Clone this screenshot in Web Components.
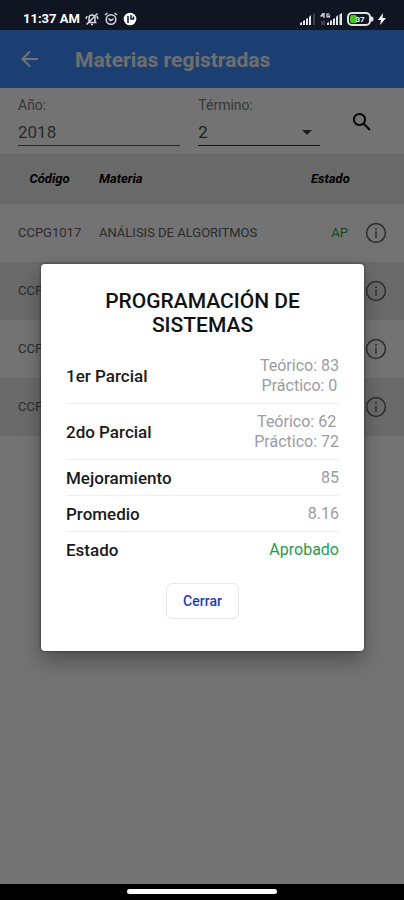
<!DOCTYPE html>
<html lang="es">
<head>
<meta charset="utf-8">
<meta name="viewport" content="width=device-width, initial-scale=1">
<title>Materias registradas</title>
<style>
body {
   margin: 0;
   font-family: Roboto, "Liberation Sans", sans-serif;
   background: #fff;
}
</style>
</head>
<body>

<mr-screen>
   <mr-status-bar slot="status" time="11:37 AM" battery="37"></mr-status-bar>
   <mr-top-bar>Materias registradas</mr-top-bar>
   <mr-filter year="2018" term="2"></mr-filter>
   <mr-subjects></mr-subjects>
   <mr-modal slot="overlay" heading="PROGRAMACIÓN DE SISTEMAS">
      <mr-grade label="1er Parcial"><div>Teórico: 83</div><div>Práctico: 0</div></mr-grade>
      <mr-grade label="2do Parcial"><div>Teórico: 62</div><div>Práctico: 72</div></mr-grade>
      <mr-grade label="Mejoramiento">85</mr-grade>
      <mr-grade label="Promedio">8.16</mr-grade>
      <mr-grade label="Estado" passed>Aprobado</mr-grade>
   </mr-modal>
</mr-screen>

<script>
// Shared base: every element renders its markup in an open shadow root
class BaseElement extends HTMLElement {
   constructor() {
      super()
      this.attachShadow({ mode: 'open' })
   }

   connectedCallback() {
      this.shadowRoot.innerHTML = this.render()
   }

   attr(name) {
      return this.getAttribute(name) ?? ''
   }
}

class Screen extends BaseElement {
   render() {
      return `
<style>
:host {
   display: flex;
   flex-direction: column;
   min-height: 100vh;
}
main {
   position: relative;
   flex: 1;
}
footer {
   display: flex;
   justify-content: center;
   height: 11px;
   padding-top: 5px;
   background: #000;
}
footer span {
   width: 37%;
   height: 5px;
   border-radius: 3px;
   background: #fff;
}
</style>
<slot name="status"></slot>
<main>
   <slot></slot>
   <slot name="overlay"></slot>
</main>
<footer><span></span></footer>`
   }
}

class StatusBar extends BaseElement {
   render() {
      return `
<style>
:host {
   display: flex;
   align-items: center;
   box-sizing: border-box;
   height: 30px;
   padding: 8px 18px 0 23px;
   background: #101522;
   color: #fff;
}
time {
   margin-right: 5px;
   font-size: 13px;
   line-height: 16px;
   font-weight: 700;
}
svg { display: block; }
.left, .right {
   display: flex;
   align-items: center;
   gap: 5px;
}
.right { margin-left: auto; gap: 4px; }
</style>
<time>${this.attr('time')}</time>
<div class="left">
   <svg width="14" height="14" viewBox="0 0 14 14" fill="none" stroke="#d5d8de" stroke-width="1.5">
      <path d="M4 10V6a3 3 0 0 1 6 0v4M2.500 10.500h9M6 12.500h2M1.500 12.500L12.500 1.500M1 7l1-3M13 7l-1-3"/>
   </svg>
   <svg width="14" height="14" viewBox="0 0 14 14" fill="none" stroke="#d5d8de" stroke-width="1.500">
      <circle cx="7" cy="7.500" r="4.800"/><path d="M1 3l2.500-2M13 3l-2.500-2M4.500 6.500L6.500 8.500L9.500 7"/>
   </svg>
   <svg width="14" height="14" viewBox="0 0 14 14">
      <circle cx="7" cy="7" r="6.300" fill="#fff"/>
      <path d="M5 11V4M8 3v4h2.500V4.500" fill="none" stroke="#101522" stroke-width="1.500"/>
   </svg>
</div>
<div class="right">
   <svg width="16" height="12" viewBox="0 0 16 12">
      <path d="M0 12V10l2-1v3zM3 12V8l2-1v5zM6 12V6l2-1v7zM9 12V4l2-2v10z" fill="#e4e6ea"/>
      <path d="M13 12V1l2-1v12z" fill="#3b404c"/>
   </svg>
   <svg width="23" height="12" viewBox="0 0 23 12">
      <path d="M3.500 0L1 3h3.500M4 0v5M9.500 1H7v3h2.500V2.800H8.500" fill="none" stroke="#e4e6ea" stroke-width="1.200"/>
      <path d="M1 8h4v4H1z" fill="#3b404c"/>
      <path d="M7 12V10l2-1v3zM10 12V8l2-1v5zM13 12V6l2-1v7zM16 12V4l2-2v10zM19.500 12V1.500l2.500-1.500v12z" fill="#e4e6ea"/>
   </svg>
   <svg width="27" height="14" viewBox="0 0 27 14" role="img" aria-label="Batería">
      <rect x="1" y="1" width="22" height="12" rx="4" fill="#101522" stroke="#dfe5dc" stroke-width="2"/>
      <rect x="3" y="3" width="7" height="8" rx="2" fill="#47c51d"/>
      <path d="M24 4.500h1q1.500 0 1.500 2.500t-1.500 2.500h-1z" fill="#dfe5dc"/>
      <text x="13" y="10" font-size="8" font-weight="700" text-anchor="middle" fill="#fff">${this.attr('battery')}</text>
   </svg>
   <svg width="8" height="12" viewBox="0 0 8 12"><path d="M5 0L0 7h3l-1 5l6-7H4.500z" fill="#fff"/></svg>
</div>`
   }
}

class TopBar extends BaseElement {
   render() {
      return `
<style>
:host {
   display: flex;
   align-items: center;
   gap: 32px;
   height: 58px;
   padding: 0 16px;
   background: #3e8cff;
   color: #fff;
}
button {
   width: 27px;
   height: 32px;
   padding: 0;
   border: 0;
   background: none;
   color: inherit;
}
svg { display: block; margin: auto; }
h1 {
   margin: 0;
   padding-top: 2px;
   font-size: 21px;
   line-height: 24px;
   font-weight: 700;
   color: #f4f4f4;
}
</style>
<button aria-label="Volver">
   <svg width="18" height="18" viewBox="0 0 18 18" fill="none" stroke="currentColor" stroke-width="2">
      <path d="M17 9H2M9 1.500L1.500 9L9 16.500"/>
   </svg>
</button>
<h1><slot></slot></h1>`
   }
}

class Filter extends BaseElement {
   render() {
      return `
<style>
form {
   display: grid;
   grid-template-columns: 4fr 3fr 48px;
   gap: 18px;
   padding: 9px 18px 8px;
}
.field { display: grid; }
label {
   font-size: 14px;
   line-height: 16px;
   color: #7c7c7c;
}
input, select {
   box-sizing: border-box;
   width: 100%;
   min-width: 0;
   height: 33px;
   margin: 0;
   padding: 6px 0 0;
   border: 0;
   border-bottom: 1px solid #555;
   border-radius: 0;
   background: none;
   appearance: none;
   font: 17px/20px Roboto, "Liberation Sans", sans-serif;
   color: #606060;
}
select { color: #444; border-color: #333; }
select, .caret { grid-area: 2 / 1; }
.caret {
   place-self: center end;
   margin: 6px 8px 0 0;
   pointer-events: none;
}
button {
   align-self: center;
   height: 40px;
   padding: 0;
   border: 0;
   background: none;
}
svg { display: block; }
button svg { margin: auto; }
</style>
<form onsubmit="return false">
   <div class="field">
      <label for="year">Año:</label>
      <input id="year" value="${this.attr('year')}" inputmode="numeric">
   </div>
   <div class="field">
      <label for="term">Término:</label>
      <select id="term"><option>${this.attr('term')}</option></select>
      <svg class="caret" width="10" height="5" viewBox="0 0 10 5"><path d="M0 0h10L5 5z" fill="#444"/></svg>
   </div>
   <button aria-label="Buscar">
      <svg width="20" height="20" viewBox="0 0 20 20" fill="none" stroke="#111" stroke-width="2">
         <circle cx="7.500" cy="7.500" r="5.600"/><path d="M11.700 11.700L18 18"/>
      </svg>
   </button>
</form>`
   }
}

class Subjects extends BaseElement {
   rows = [
      ['CCPG1017', 'ANÁLISIS DE ALGORITMOS', 'AP'],
      ['CCPG', '', ''],
      ['CCPG', '', ''],
      ['CCPG', '', '']
   ]

   row([code, name, state]) {
      return `
<tr>
   <td class="code">${code}</td>
   <td>${name}</td>
   <td class="state">${state}</td>
   <td>
      <button aria-label="Detalle">
         <svg width="22" height="22" viewBox="0 0 22 22" fill="none" stroke="#666" stroke-width="1.500">
            <circle cx="11" cy="11" r="9.400"/><path d="M11 9.500v6.500M11 6v2"/>
         </svg>
      </button>
   </td>
</tr>`
   }

   render() {
      return `
<style>
:host { display: block; }
table {
   width: 100%;
   table-layout: fixed;
   border-collapse: collapse;
   font-size: 13px;
   line-height: 16px;
}
th, td { padding: 0; text-align: left; }
thead tr { height: 50px; background: #e9e9e9; }
th {
   font-weight: 700;
   font-style: italic;
   color: #000;
}
th:first-child { text-align: center; }
tbody tr { height: 58px; }
tbody tr:nth-child(even) { background: #ececec; }
td { color: #606060; }
.code { padding-left: 18px; }
.state { color: #27a05c; text-align: right; }
button {
   display: block;
   margin: auto;
   padding: 0;
   border: 0;
   background: none;
}
svg { display: block; }
</style>
<table>
   <colgroup><col style="width:99px"><col><col style="width:37px"><col style="width:56px"></colgroup>
   <thead><tr><th>Código</th><th>Materia</th><th colspan="2">Estado</th></tr></thead>
   <tbody>${this.rows.map(r => this.row(r)).join('')}</tbody>
</table>`
   }
}

class Modal extends BaseElement {
   render() {
      return `
<style>
/* scrim, covers everything between the system bars */
:host {
   position: absolute;
   inset: 0;
   display: grid;
   align-items: center;
   padding: 0 40px 0 41px;
   background: rgba(0, 0, 0, .55);
}
section {
   padding: 25px 25px 32px;
   border-radius: 4px;
   background: #fff;
   box-shadow: 0 10px 20px rgba(0, 0, 0, .3), 0 0 3px rgba(0, 0, 0, .5);
}
h2 {
   margin: 0 0 11px;
   padding: 0 30px;
   font-size: 21px;
   line-height: 24px;
   font-weight: 500;
   text-align: center;
   color: #111;
}
button {
   display: block;
   height: 36px;
   margin: 15px auto 0;
   padding: 0 16px;
   border: 1px solid #e6e6e8;
   border-radius: 6px;
   background: #fff;
   font: 500 14px/20px Roboto, "Liberation Sans", sans-serif;
   color: #1a41b8;
}
</style>
<section role="dialog" aria-labelledby="heading">
   <h2 id="heading">${this.attr('heading')}</h2>
   <slot></slot>
   <button>Cerrar</button>
</section>`
   }
}

class Grade extends BaseElement {
   render() {
      return `
<style>
:host {
   display: flex;
   align-items: center;
   justify-content: space-between;
   padding: 8px 0;
   box-shadow: inset 0 -1px #f0f0f2;
   font-size: 16px;
   line-height: 20px;
}
:host([passed]) { box-shadow: none; }
b { font-size: 17px; font-weight: 500; color: #1a1a1a; }
.value { text-align: center; color: #9a9ca3; }
:host([passed]) .value { color: #1f9d4d; }
</style>
<b>${this.attr('label')}</b>
<div class="value"><slot></slot></div>`
   }
}

// Register the elements
function register() {
   customElements.define('mr-screen', Screen)
   customElements.define('mr-status-bar', StatusBar)
   customElements.define('mr-top-bar', TopBar)
   customElements.define('mr-filter', Filter)
   customElements.define('mr-subjects', Subjects)
   customElements.define('mr-modal', Modal)
   customElements.define('mr-grade', Grade)
}

register()
</script>
</body>
</html>
